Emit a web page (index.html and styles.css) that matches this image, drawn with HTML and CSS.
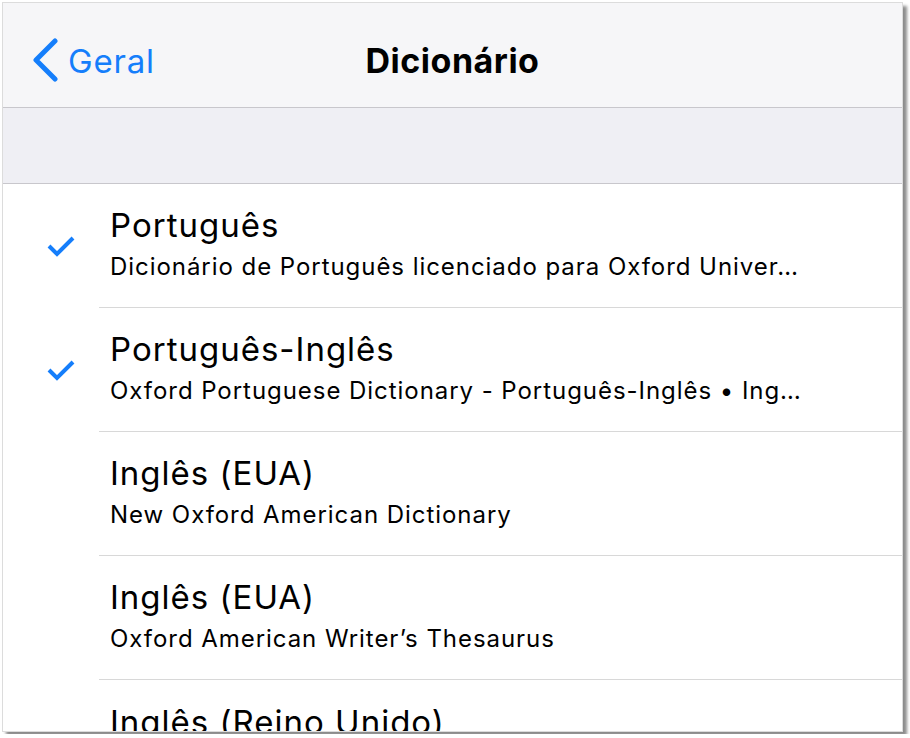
FILE: index.html
```html
<!DOCTYPE html>
<html lang="pt">
  <head>
    <meta charset="UTF-8" />
    <title>Dicionário</title>
    <link rel="stylesheet" href="styles.css">
  </head>
  <body>
    <div class="screen">
      <div class="navbar">
        <div class="back">
          <svg class="chevron" width="28" height="44" viewBox="0 0 28 44">
            <path d="M24 3 L5 22 L24 41" fill="none" stroke="#157efb" stroke-width="5" stroke-linecap="round" stroke-linejoin="round" />
          </svg>
          <span>Geral</span>
        </div>
        <div class="title">Dicionário</div>
      </div>
      <div class="section-header"></div>
      <div class="list">
        <div class="row">
          <div class="check">
            <svg width="30" height="22" viewBox="0 0 30 22"><path d="M3 11 L11 19 L27 3" fill="none" stroke="#157efb" stroke-width="4" /></svg>
          </div>
          <div class="cell">
            <div class="name">Português</div>
            <div class="desc">Dicionário de Português licenciado para Oxford Univer…</div>
          </div>
        </div>
        <div class="row">
          <div class="check">
            <svg width="30" height="22" viewBox="0 0 30 22"><path d="M3 11 L11 19 L27 3" fill="none" stroke="#157efb" stroke-width="4" /></svg>
          </div>
          <div class="cell">
            <div class="name">Português-Inglês</div>
            <div class="desc">Oxford Portuguese Dictionary - Português-Inglês • Ing…</div>
          </div>
        </div>
        <div class="row">
          <div class="check"></div>
          <div class="cell">
            <div class="name">Inglês (EUA)</div>
            <div class="desc">New Oxford American Dictionary</div>
          </div>
        </div>
        <div class="row">
          <div class="check"></div>
          <div class="cell">
            <div class="name">Inglês (EUA)</div>
            <div class="desc">Oxford American Writer’s Thesaurus</div>
          </div>
        </div>
        <div class="row last">
          <div class="check"></div>
          <div class="cell">
            <div class="name">Inglês (Reino Unido)</div>
          </div>
        </div>
      </div>
    </div>
  </body>
</html>
```

FILE: styles.css
```css
html,
body {
  margin: 0;
  padding: 0;
  background: #fff;
}

body {
  padding: 2px;
  font-family: Inter, "Noto Sans", sans-serif;
  color: #000;
}

.screen {
  width: 899px;
  height: 728px;
  border: 1px solid #dcdcdc;
  overflow: hidden;
  background: #fff;
  box-shadow: 4px 4px 3px rgba(0, 0, 0, 0.45);
}

.navbar {
  position: relative;
  height: 105px;
  box-sizing: border-box;
  padding-top: 10px;
  background: #f6f6f8;
  border-bottom: 1px solid #c8c7cc;
  display: flex;
  align-items: center;
  justify-content: center;
}

.back {
  position: absolute;
  left: 28px;
  top: 35px;
  display: flex;
  align-items: center;
  gap: 9px;
  color: #157efb;
  font-size: 33px;
  letter-spacing: 0.8px;
}

.back span {
  padding-top: 1px;
}

.title {
  font-size: 34px;
  font-weight: 700;
  letter-spacing: 0.5px;
}

.section-header {
  height: 75px;
  background: #efeff4;
  border-bottom: 1px solid #c8c7cc;
}

.row {
  display: flex;
  height: 124px;
}

.check {
  width: 96px;
  flex: none;
  display: flex;
  align-items: center;
  justify-content: center;
  padding-left: 19px;
  box-sizing: border-box;
}

.cell {
  flex: 1;
  min-width: 0;
  padding: 21px 0 0 11px;
  border-bottom: 1px solid #d8d8d8;
}

.last .cell {
  padding-top: 22px;
}

.name {
  font-size: 33px;
  line-height: 40px;
  letter-spacing: 1px;
}

.desc {
  margin-top: 7px;
  font-size: 24px;
  line-height: 30px;
  letter-spacing: 0.95px;
  white-space: nowrap;
}
```
